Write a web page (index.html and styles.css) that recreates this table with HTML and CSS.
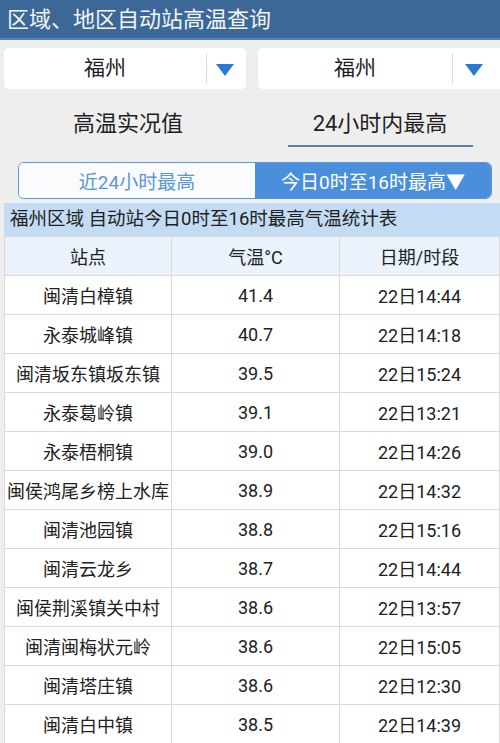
FILE: index.html
```html
<!DOCTYPE html>
<html lang="zh">
<head>
<meta charset="utf-8">
<link rel="stylesheet" href="styles.css">
</head>
<body>
<header class="topbar">区域、地区自动站高温查询</header>
<div class="selects">
  <div class="select">
    <span class="select-text">福州</span>
    <span class="select-arrow"><svg width="18" height="12" viewBox="0 0 18 12"><path d="M0 0H18L9 12Z" fill="#2a7ad5"/></svg></span>
  </div>
  <div class="select select-right">
    <span class="select-text">福州</span>
    <span class="select-arrow"><svg width="18" height="12" viewBox="0 0 18 12"><path d="M0 0H18L9 12Z" fill="#2a7ad5"/></svg></span>
  </div>
</div>
<div class="tabs">
  <div class="tab"><span>高温实况值</span></div>
  <div class="tab tab-active"><span>24小时内最高</span></div>
</div>
<div class="segment">
  <div class="seg seg-off">近24小时最高</div>
  <div class="seg seg-on">今日0时至16时最高▼</div>
</div>
<div class="caption">福州区域 自动站今日0时至16时最高气温统计表</div>
<table class="data">
  <thead>
    <tr><th>站点</th><th>气温°C</th><th>日期/时段</th></tr>
  </thead>
  <tbody>
    <tr><td>闽清白樟镇</td><td>41.4</td><td>22日14:44</td></tr>
    <tr><td>永泰城峰镇</td><td>40.7</td><td>22日14:18</td></tr>
    <tr><td>闽清坂东镇坂东镇</td><td>39.5</td><td>22日15:24</td></tr>
    <tr><td>永泰葛岭镇</td><td>39.1</td><td>22日13:21</td></tr>
    <tr><td>永泰梧桐镇</td><td>39.0</td><td>22日14:26</td></tr>
    <tr><td>闽侯鸿尾乡榜上水库</td><td>38.9</td><td>22日14:32</td></tr>
    <tr><td>闽清池园镇</td><td>38.8</td><td>22日15:16</td></tr>
    <tr><td>闽清云龙乡</td><td>38.7</td><td>22日14:44</td></tr>
    <tr><td>闽侯荆溪镇关中村</td><td>38.6</td><td>22日13:57</td></tr>
    <tr><td>闽清闽梅状元岭</td><td>38.6</td><td>22日15:05</td></tr>
    <tr><td>闽清塔庄镇</td><td>38.6</td><td>22日12:30</td></tr>
    <tr><td>闽清白中镇</td><td>38.5</td><td>22日14:39</td></tr>
  </tbody>
</table>
</body>
</html>
```

FILE: styles.css
```css
html, body {
  margin: 0;
  padding: 0;
}
body {
  width: 500px;
  height: 743px;
  overflow: hidden;
  background: #eeeeee;
  font-family: Roboto, "Noto Sans CJK SC", "Noto Sans", sans-serif;
  color: #222;
}
.topbar {
  height: 40px;
  line-height: 39px;
  background: #3c6898;
  color: #f2f5f8;
  font-size: 22px;
  padding-left: 7px;
  border-bottom: 2px solid #5a83b0;
  box-sizing: border-box;
}
.selects {
  display: flex;
  gap: 12px;
  padding: 8px 0 0 4px;
  height: 49px;
  box-sizing: border-box;
}
.select {
  flex: 0 0 242px;
  height: 41px;
  background: #fff;
  border-radius: 5px;
  display: flex;
  align-items: center;
}
.select-right {
  flex: 0 0 250px;
}
.select-text {
  flex: 0 0 202px;
  text-align: center;
  font-size: 21px;
  color: #1e1e1e;
  border-right: 1px solid #dcdcdc;
  line-height: 31px;
}
.select-right .select-text {
  flex-basis: 194px;
}
.select-arrow {
  flex: 1;
  display: flex;
  justify-content: center;
  padding-top: 2px;
  padding-right: 3px;
}
.select-right .select-arrow {
  justify-content: flex-start;
  padding-left: 12px;
}
.tabs {
  display: flex;
  height: 62px;
}
.tab {
  flex: 0 0 256px;
  display: flex;
  justify-content: center;
  align-items: flex-start;
  padding-top: 19px;
  font-size: 22px;
  color: #1e1e1e;
}
.tab-active {
  flex: 0 0 240px;
  padding-left: 4px;
}
.tab span {
  display: block;
  width: 185px;
  text-align: center;
  padding-bottom: 5px;
  line-height: 32px;
}
.tab-active span {
  border-bottom: 2px solid #5b7fa5;
}
.segment {
  display: flex;
  margin: 11px 8px 0 18px;
  height: 37px;
  border: 1px solid #5e97d6;
  border-radius: 6px;
  overflow: hidden;
  box-sizing: border-box;
}
.seg {
  flex: 0 0 236px;
  display: flex;
  justify-content: center;
  align-items: center;
  font-size: 19px;
}
.seg-off {
  background: #fafbfd;
  color: #5a97d8;
}
.seg-on {
  flex: 1;
  background: #4a8fdc;
  color: #fff;
}
.caption {
  margin: 4px 0 0 4px;
  height: 33px;
  line-height: 32px;
  background: #c3dbf3;
  font-size: 18.5px;
  padding-left: 6px;
  color: #1e1e1e;
  white-space: nowrap;
}
.data {
  margin-left: 4px;
  width: 496px;
  border-collapse: collapse;
  background: #fff;
  table-layout: fixed;
  font-size: 18px;
  color: #222;
}
.data th, .data td {
  border: 1px solid #dadada;
  text-align: center;
  padding: 0;
  font-weight: normal;
}
.data th {
  height: 38px;
  background: #eaf2fc;
}
.data td {
  height: 38px;
  white-space: nowrap;
}
.data th:nth-child(1), .data td:nth-child(1) { width: 166px; }
.data th:nth-child(2), .data td:nth-child(2) { width: 167px; }
```
